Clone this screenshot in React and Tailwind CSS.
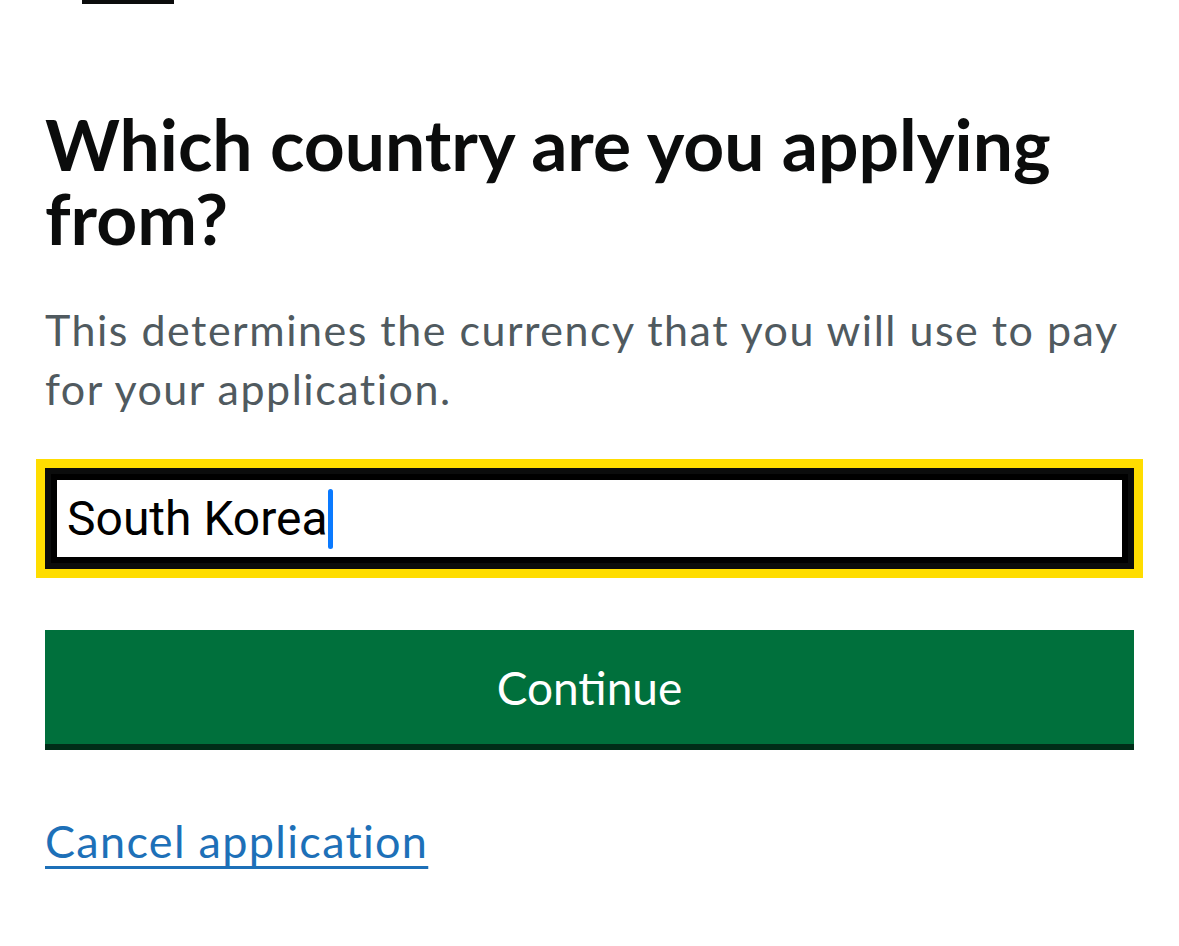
export default function App() {
  return (
    <div className="min-h-[946px] bg-white font-['Lato',sans-serif] text-[#0b0c0c]">
      {/* tail of the back link, cut off at the top */}
      <div className="ml-[82px] h-[4px] w-[92px] bg-[#0b0c0c]" />

      <main className="px-[45px]">
        <h1 className="mt-[103px] text-[71.4px] font-bold leading-[74px] text-[#0b0c0c]">
          Which country are you applying from?
        </h1>

        <p className="mt-[45px] text-[43px] leading-[59px] tracking-[1.5px] text-[#505a5f]">
          This determines the currency that you will use to pay for your application.
        </p>

        <div className="mt-[50px] flex h-[101px] items-center border-[6px] border-[#0b0c0c] bg-white pl-[16px] shadow-[inset_0_0_0_6px_#000] outline-[9px] outline-solid outline-[#ffdd00]">
          <span className="font-['Roboto',sans-serif] text-[48px] text-black">South Korea</span>
          <span className="h-[60px] w-[5px] rounded-full bg-[#0a7aff]" />
        </div>

        <button className="mt-[61px] flex h-[114px] w-full items-center justify-center bg-[#00703c] text-[46px] text-white shadow-[0_6px_0_#002d18]">
          Continue
        </button>

        <div className="mt-[70px]">
          <a
            href="#"
            className="text-[45px] leading-[54px] tracking-[1.3px] text-[#1d70b8] underline decoration-[3px] underline-offset-[8px]"
          >
            Cancel application
          </a>
        </div>
      </main>
    </div>
  );
}
